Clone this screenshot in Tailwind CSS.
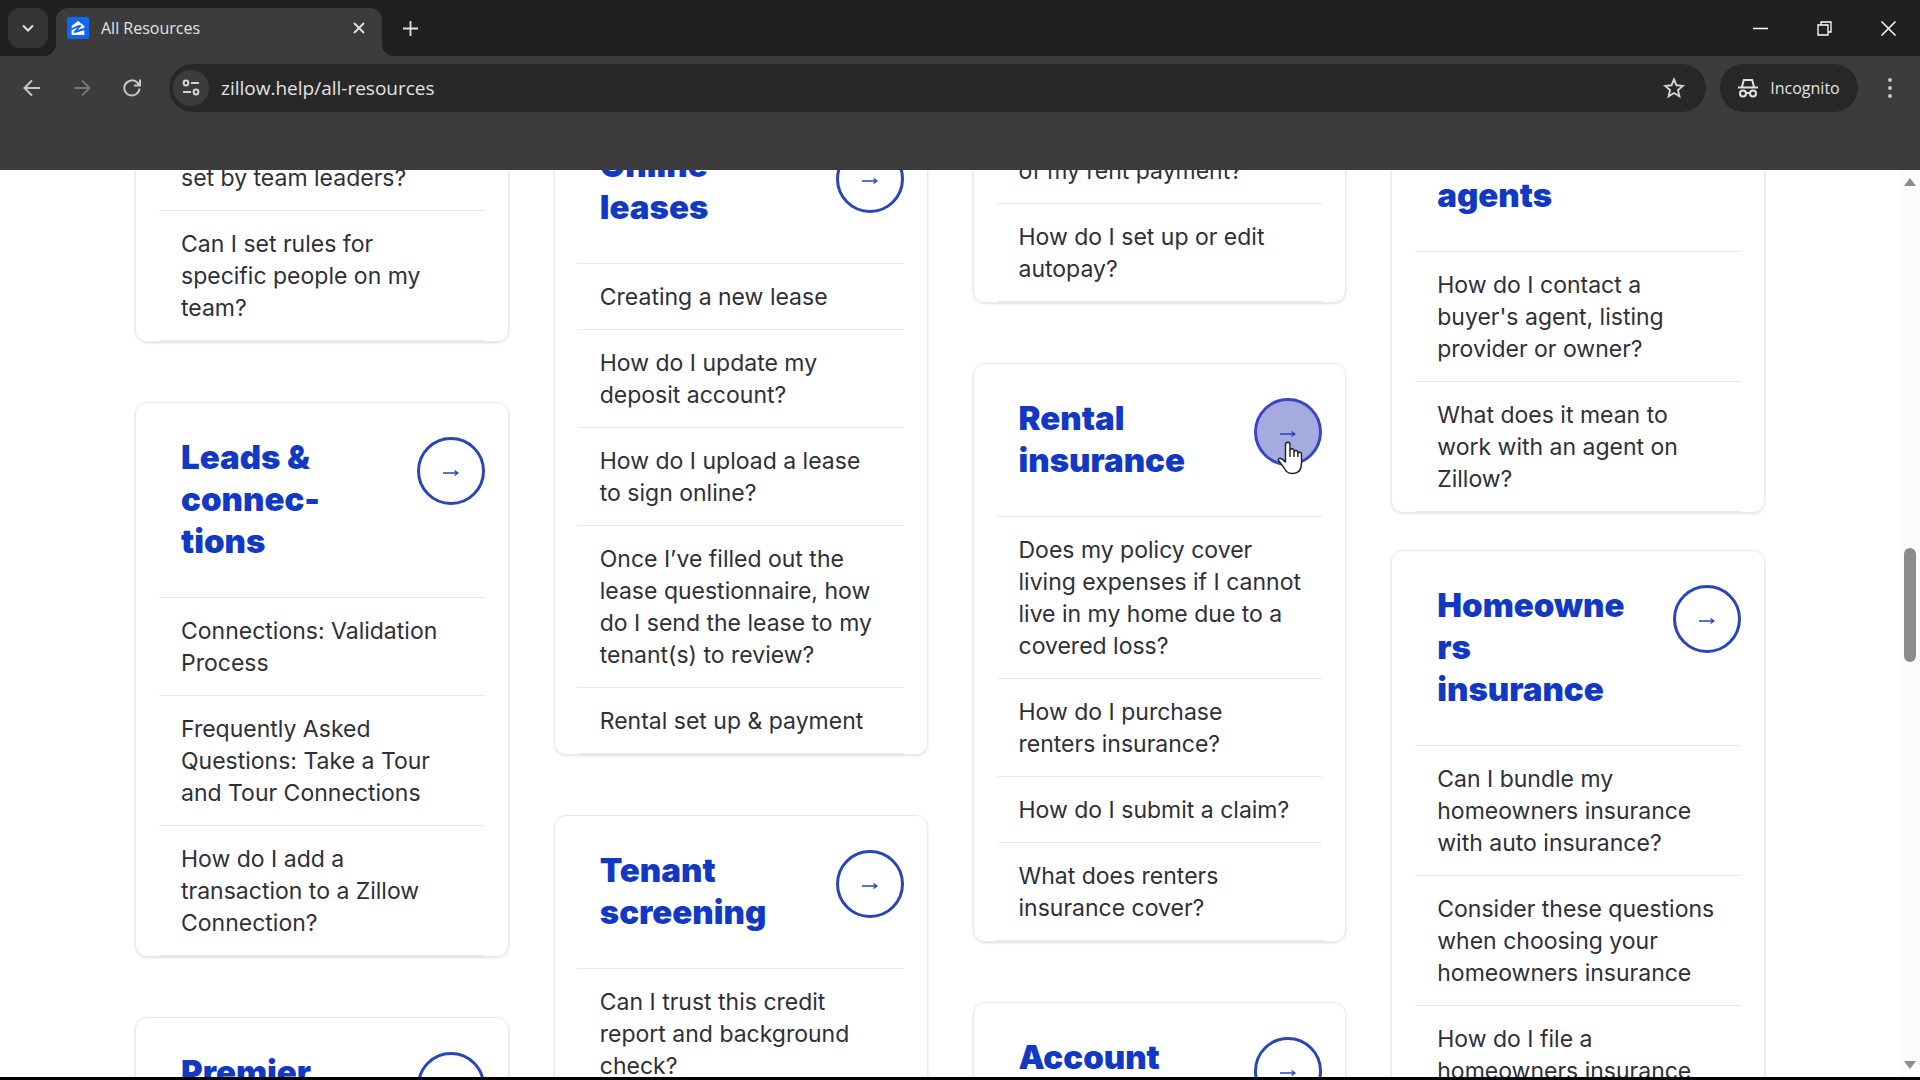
<!DOCTYPE html>
<html lang="en">
<head>
<meta charset="utf-8">
<meta name="viewport" content="width=device-width, initial-scale=1">
<title>All Resources</title>
<script src="https://cdn.jsdelivr.net/npm/@tailwindcss/browser@4"></script>
</head>
<body class="flex h-screen flex-col overflow-hidden bg-white font-['Inter',sans-serif]">

<svg class="hidden" aria-hidden="true">
  <symbol id="arrow" viewBox="0 0 16 8"><path d="M0 4h14.500M11.500 1.500 15 4l-3.500 2.500" fill="none" stroke="currentColor" stroke-width="1.300"/></symbol>
</svg>

<!-- Browser chrome -->
<header class="shrink-0 bg-[#3c3c3c] font-['Open_Sans','Noto_Sans',sans-serif] text-[#e3e3e3]">
  <div class="flex h-14 bg-[#202020] pl-2">
    <button aria-label="Search tabs" class="mt-2 flex size-10 items-center justify-center rounded-xl bg-[#353535]">
      <svg class="size-4" viewBox="0 0 16 16" fill="none" stroke="currentColor" stroke-width="2"><path d="M3 5.500 8 10.500l5-5"/></svg>
    </button>
    <div class="relative ml-2 mt-2 flex h-12 w-[326px] items-center rounded-t-xl bg-[#3c3c3c] pb-2 pl-[11px] pr-[11px]">
      <svg class="absolute bottom-0 -left-3 size-3 text-[#3c3c3c]" viewBox="0 0 12 12" fill="currentColor"><path d="M12 0v12H0A12 12 0 0 0 12 0"/></svg>
      <svg class="absolute bottom-0 -right-3 size-3 text-[#3c3c3c]" viewBox="0 0 12 12" fill="currentColor"><path d="M0 0v12h12A12 12 0 0 1 0 0"/></svg>
      <svg class="size-[22px]" viewBox="0 0 22 22"><rect width="22" height="22" rx="2" fill="#1266f1"/><path transform="translate(4 4) scale(.58)" fill="#fff" d="M12.006 0L1.086 8.627v3.868c3.386-2.013 11.219-5.130 14.763-6.015.110-.024.160.005.227.078.372.427 1.586 1.899 1.916 2.301a.128.128 0 0 1-.030.195 43.607 43.607 0 0 0-6.670 6.527c-.030.037-.006.043.012.030 2.642-1.134 8.828-2.940 11.622-3.452V8.627zm-.480 11.177c-2.136.708-8.195 3.307-10.452 4.576V24h21.852v-7.936c-2.990.506-11.902 3.160-15.959 5.246a.184.184 0 0 1-.230-.036l-2.044-2.429c-.055-.061-.062-.098.011-.208 1.574-2.300 4.789-5.899 6.833-7.418.042-.030.031-.060-.012-.042Z"/></svg>
      <span class="ml-3 flex-1 text-base">All Resources</span>
      <button aria-label="Close tab" class="flex size-6 items-center justify-center">
        <svg class="size-3" viewBox="0 0 12 12" stroke="currentColor" stroke-width="1.800"><path d="M1 1l10 10M11 1 1 11"/></svg>
      </button>
    </div>
    <button aria-label="New tab" class="ml-4 flex h-14 w-6 items-center justify-center">
      <svg class="size-[15px]" viewBox="0 0 15 15" stroke="currentColor" stroke-width="1.800"><path d="M7.500 0v15M0 7.500h15"/></svg>
    </button>
    <div class="ml-auto flex text-white">
      <button aria-label="Minimize" class="flex h-14 w-16 items-center justify-center"><svg class="size-[15px]" viewBox="0 0 15 15" stroke="currentColor" stroke-width="1.500"><path d="M0 7.500h15"/></svg></button>
      <button aria-label="Restore" class="flex h-14 w-16 items-center justify-center"><svg class="size-[15px]" viewBox="0 0 15 15" fill="none" stroke="currentColor" stroke-width="1.300"><path d="M1 4h10v10H1zM4 4V1h10v10h-3"/></svg></button>
      <button aria-label="Close" class="flex h-14 w-16 items-center justify-center"><svg class="size-[15px]" viewBox="0 0 15 15" stroke="currentColor" stroke-width="1.500"><path d="M.5.5l14 14M14.500.5l-14 14"/></svg></button>
    </div>
  </div>
  <div class="flex items-center pb-[58px] pl-4 pr-3.5 pt-2">
    <button aria-label="Back" class="flex size-8 items-center justify-center"><svg class="size-[18px]" viewBox="0 0 18 18" fill="none" stroke="#c7c7c7" stroke-width="2"><path d="M17 9H2M9 1.500 1.500 9 9 16.500"/></svg></button>
    <button aria-label="Forward" class="ml-[18px] flex size-8 items-center justify-center"><svg class="size-[18px]" viewBox="0 0 18 18" fill="none" stroke="#757575" stroke-width="2"><path d="M1 9h15M9 1.500 16.500 9 9 16.500"/></svg></button>
    <button aria-label="Reload" class="ml-[18px] flex size-8 items-center justify-center"><svg class="size-[18px]" viewBox="0 0 18 18" fill="none" stroke="#c7c7c7" stroke-width="2"><path d="M16.500 9.500A7.600 7.600 0 1 1 14.500 3.800L16.500 6M17 .5v6h-6"/></svg></button>
    <div class="ml-[21px] flex h-12 flex-1 items-center rounded-full bg-[#282828] pl-1 pr-5">
      <button aria-label="View site information" class="flex size-9 items-center justify-center rounded-full bg-[#3c3c3c]">
        <svg class="size-[18px]" viewBox="0 0 18 18" fill="none" stroke="#d5d5d5" stroke-width="2"><circle cx="4" cy="4" r="2.400"/><path d="M9 4h8M1 13h8"/><circle cx="14" cy="13" r="2.400"/></svg>
      </button>
      <input aria-label="Address" value="zillow.help/all-resources" class="ml-3 min-w-0 flex-1 bg-transparent text-[19px] outline-none">
      <button aria-label="Bookmark this tab" class="flex size-6 items-center justify-center"><svg class="size-[22px]" viewBox="0 0 22 22" fill="none" stroke="#d5d5d5" stroke-width="1.900"><path d="m11 2.500 2.500 5.800 6.300.6-4.800 4.200 1.400 6.200L11 16l-5.400 3.300L7 13.100 2.200 8.900l6.300-.6z"/></svg></button>
    </div>
    <button class="ml-3.5 flex h-12 w-[138px] items-center justify-center gap-3 rounded-full bg-[#282828] text-base">
      <svg class="size-5" viewBox="0 0 20 20" fill="none" stroke="currentColor" stroke-width="2"><path d="M0 9.500h20M4 9 5.800 2h8.400L16 9"/><circle cx="5" cy="15.500" r="3"/><circle cx="15" cy="15.500" r="3"/><path d="M8 15h4"/></svg>
      Incognito
    </button>
    <button aria-label="More" class="ml-4 flex size-8 items-center justify-center"><svg class="h-5 w-1" viewBox="0 0 4 20" fill="#c7c7c7"><circle cx="2" cy="2" r="2"/><circle cx="2" cy="10" r="2"/><circle cx="2" cy="18" r="2"/></svg></button>
  </div>
</header>

<div class="flex min-h-0 flex-1">
  <main class="grid min-w-0 flex-1 grid-cols-4 items-start gap-[45px] overflow-hidden px-[135px] text-[23px] leading-8 text-[#2f2f3a]">

    <!-- Column 1 -->
    <div class="-mt-[25px] flex flex-col gap-[60px]">
      <section class="rounded-xl border border-[#e9e9ec] px-[23px] shadow-sm">
        <ul>
          <li class="whitespace-nowrap border-b border-[#e9e9ec] px-[22px] pb-4 pt-4"><a href="#">set by team leaders?</a></li>
          <li class="whitespace-nowrap border-b border-[#e9e9ec] px-[22px] pb-4 pt-[17px]"><a href="#">Can I set rules for<br>specific people on my<br>team?</a></li>
        </ul>
      </section>
      <section class="rounded-xl border border-[#e9e9ec] px-[23px] shadow-sm">
        <div class="flex items-start justify-between border-b border-[#e9e9ec] pb-[35px] pl-[22px] pt-[33px]">
          <h2 class="text-[33px] font-black leading-[42px] text-[#1239c4]">Leads &amp;<br>connec-<br>tions</h2>
          <a href="#" aria-label="Leads &amp; connections" class="mt-px flex size-[68px] shrink-0 items-center justify-center rounded-full border-[3px] border-[#2a45b5] text-[#2a45b5]"><svg class="mt-1 h-2 w-4"><use href="#arrow"/></svg></a>
        </div>
        <ul>
          <li class="whitespace-nowrap border-b border-[#e9e9ec] px-[22px] pb-4 pt-[17px]"><a href="#">Connections: Validation<br>Process</a></li>
          <li class="whitespace-nowrap border-b border-[#e9e9ec] px-[22px] pb-4 pt-[17px]"><a href="#">Frequently Asked<br>Questions: Take a Tour<br>and Tour Connections</a></li>
          <li class="whitespace-nowrap border-b border-[#e9e9ec] px-[22px] pb-4 pt-[17px]"><a href="#">How do I add a<br>transaction to a Zillow<br>Connection?</a></li>
        </ul>
      </section>
      <section class="rounded-xl border border-[#e9e9ec] px-[23px] shadow-sm">
        <div class="flex items-start justify-between pb-[35px] pl-[22px] pt-[33px]">
          <h2 class="text-[33px] font-black leading-[42px] text-[#1239c4]">Premier</h2>
          <a href="#" aria-label="Premier" class="mt-px flex size-[68px] shrink-0 items-center justify-center rounded-full border-[3px] border-[#2a45b5] text-[#2a45b5]"><svg class="mt-1 h-2 w-4"><use href="#arrow"/></svg></a>
        </div>
      </section>
    </div>

    <!-- Column 2 -->
    <div class="-mt-[60px] flex flex-col gap-[60px]">
      <section class="rounded-xl border border-[#e9e9ec] px-[23px] shadow-sm">
        <div class="flex items-start justify-between border-b border-[#e9e9ec] pb-[35px] pl-[22px] pt-[33px]">
          <h2 class="text-[33px] font-black leading-[42px] text-[#1239c4]">Online<br>leases</h2>
          <a href="#" aria-label="Online leases" class="mt-px flex size-[68px] shrink-0 items-center justify-center rounded-full border-[3px] border-[#2a45b5] text-[#2a45b5]"><svg class="mt-1 h-2 w-4"><use href="#arrow"/></svg></a>
        </div>
        <ul>
          <li class="whitespace-nowrap border-b border-[#e9e9ec] px-[22px] pb-4 pt-[17px]"><a href="#">Creating a new lease</a></li>
          <li class="whitespace-nowrap border-b border-[#e9e9ec] px-[22px] pb-4 pt-[17px]"><a href="#">How do I update my<br>deposit account?</a></li>
          <li class="whitespace-nowrap border-b border-[#e9e9ec] px-[22px] pb-4 pt-[17px]"><a href="#">How do I upload a lease<br>to sign online?</a></li>
          <li class="whitespace-nowrap border-b border-[#e9e9ec] px-[22px] pb-4 pt-[17px]"><a href="#">Once I’ve filled out the<br>lease questionnaire, how<br>do I send the lease to my<br>tenant(s) to review?</a></li>
          <li class="whitespace-nowrap border-b border-[#e9e9ec] px-[22px] pb-4 pt-[17px]"><a href="#">Rental set up &amp; payment</a></li>
        </ul>
      </section>
      <section class="rounded-xl border border-[#e9e9ec] px-[23px] shadow-sm">
        <div class="flex items-start justify-between border-b border-[#e9e9ec] pb-[35px] pl-[22px] pt-[33px]">
          <h2 class="text-[33px] font-black leading-[42px] text-[#1239c4]">Tenant<br>screening</h2>
          <a href="#" aria-label="Tenant screening" class="mt-px flex size-[68px] shrink-0 items-center justify-center rounded-full border-[3px] border-[#2a45b5] text-[#2a45b5]"><svg class="mt-1 h-2 w-4"><use href="#arrow"/></svg></a>
        </div>
        <ul>
          <li class="whitespace-nowrap px-[22px] pb-4 pt-[17px]"><a href="#">Can I trust this credit<br>report and background<br>check?</a></li>
        </ul>
      </section>
    </div>

    <!-- Column 3 -->
    <div class="-mt-8 flex flex-col gap-[60px]">
      <section class="rounded-xl border border-[#e9e9ec] px-[23px] shadow-sm">
        <ul>
          <li class="whitespace-nowrap border-b border-[#e9e9ec] px-[22px] pb-4 pt-4"><a href="#">of my rent payment?</a></li>
          <li class="whitespace-nowrap border-b border-[#e9e9ec] px-[22px] pb-4 pt-[17px]"><a href="#">How do I set up or edit<br>autopay?</a></li>
        </ul>
      </section>
      <section class="rounded-xl border border-[#e9e9ec] px-[23px] shadow-sm">
        <div class="flex items-start justify-between border-b border-[#e9e9ec] pb-[35px] pl-[22px] pt-[33px]">
          <h2 class="text-[33px] font-black leading-[42px] text-[#1239c4]">Rental<br>insurance</h2>
          <a href="#" aria-label="Rental insurance" class="relative mt-px flex size-[68px] shrink-0 items-center justify-center rounded-full border-[3px] border-[#3d45c4] bg-[#a5abdf] text-[#2a45b5]"><svg class="mt-1 h-2 w-4"><use href="#arrow"/></svg>
            <svg class="absolute left-5 top-10 h-[34px] w-[26px]" viewBox="0 0 26 34"><path d="M8.500 20V3.500a2.200 2.200 0 0 1 4.500 0v6a2 2 0 0 1 4 .6v.8a2 2 0 0 1 3.900.6v.8a1.900 1.900 0 0 1 3.600.8V22c0 7-3 10.500-9 10.500-5.500 0-7-3-9-6.500L1.500 19.500c-.6-1.500 1-2.800 2.500-2 1.500.7 3 1.700 4.500 3.500z" fill="#fff" stroke="#222" stroke-width="1.400" stroke-linejoin="round"/><path d="M13 9.500V16M17 11v5M20.900 12v4" stroke="#222" stroke-width="1.400"/></svg>
          </a>
        </div>
        <ul>
          <li class="whitespace-nowrap border-b border-[#e9e9ec] px-[22px] pb-4 pt-[17px]"><a href="#">Does my policy cover<br>living expenses if I cannot<br>live in my home due to a<br>covered loss?</a></li>
          <li class="whitespace-nowrap border-b border-[#e9e9ec] px-[22px] pb-4 pt-[17px]"><a href="#">How do I purchase<br>renters insurance?</a></li>
          <li class="whitespace-nowrap border-b border-[#e9e9ec] px-[22px] pb-4 pt-[17px]"><a href="#">How do I submit a claim?</a></li>
          <li class="whitespace-nowrap border-b border-[#e9e9ec] px-[22px] pb-4 pt-[17px]"><a href="#">What does renters<br>insurance cover?</a></li>
        </ul>
      </section>
      <section class="rounded-xl border border-[#e9e9ec] px-[23px] shadow-sm">
        <div class="flex items-start justify-between pb-[35px] pl-[22px] pt-[33px]">
          <h2 class="text-[33px] font-black leading-[42px] text-[#1239c4]">Account</h2>
          <a href="#" aria-label="Account" class="mt-px flex size-[68px] shrink-0 items-center justify-center rounded-full border-[3px] border-[#2a45b5] text-[#2a45b5]"><svg class="mt-1 h-2 w-4"><use href="#arrow"/></svg></a>
        </div>
      </section>
    </div>

    <!-- Column 4 -->
    <div class="-mt-[30px] flex flex-col gap-[37px]">
      <section class="rounded-xl border border-[#e9e9ec] px-[23px] shadow-sm">
        <div class="border-b border-[#e9e9ec] pb-[35px] pl-[22px] pt-[33px]">
          <h2 class="text-[33px] font-black leading-[42px] text-[#1239c4]">agents</h2>
        </div>
        <ul>
          <li class="whitespace-nowrap border-b border-[#e9e9ec] px-[22px] pb-4 pt-[17px]"><a href="#">How do I contact a<br>buyer's agent, listing<br>provider or owner?</a></li>
          <li class="whitespace-nowrap border-b border-[#e9e9ec] px-[22px] pb-4 pt-[17px]"><a href="#">What does it mean to<br>work with an agent on<br>Zillow?</a></li>
        </ul>
      </section>
      <section class="rounded-xl border border-[#e9e9ec] px-[23px] shadow-sm">
        <div class="flex items-start justify-between border-b border-[#e9e9ec] pb-[35px] pl-[22px] pt-[33px]">
          <h2 class="text-[33px] font-black leading-[42px] text-[#1239c4]">Homeowne<br>rs<br>insurance</h2>
          <a href="#" aria-label="Homeowners insurance" class="mt-px flex size-[68px] shrink-0 items-center justify-center rounded-full border-[3px] border-[#2a45b5] text-[#2a45b5]"><svg class="mt-1 h-2 w-4"><use href="#arrow"/></svg></a>
        </div>
        <ul>
          <li class="whitespace-nowrap border-b border-[#e9e9ec] px-[22px] pb-4 pt-[17px]"><a href="#">Can I bundle my<br>homeowners insurance<br>with auto insurance?</a></li>
          <li class="whitespace-nowrap border-b border-[#e9e9ec] px-[22px] pb-4 pt-[17px]"><a href="#">Consider these questions<br>when choosing your<br>homeowners insurance</a></li>
          <li class="whitespace-nowrap px-[22px] pb-4 pt-[17px]"><a href="#">How do I file a<br>homeowners insurance</a></li>
        </ul>
      </section>
    </div>
  </main>

  <!-- Scrollbar -->
  <div class="flex w-5 shrink-0 flex-col items-center bg-[#fcfcfc] py-2" aria-hidden="true">
    <svg class="h-2 w-3" viewBox="0 0 12 8" fill="#8b8b8b"><path d="M6 0l6 8H0z"/></svg>
    <div class="flex w-3 flex-1 flex-col">
      <div class="grow-[362]"></div>
      <div class="grow-[114] rounded-full bg-[#8b8b8b]"></div>
      <div class="grow-[399]"></div>
    </div>
    <svg class="h-2 w-3" viewBox="0 0 12 8" fill="#8b8b8b"><path d="M0 0h12L6 8z"/></svg>
  </div>
</div>
<div class="h-[3px] shrink-0 bg-black"></div>
</body>
</html>
